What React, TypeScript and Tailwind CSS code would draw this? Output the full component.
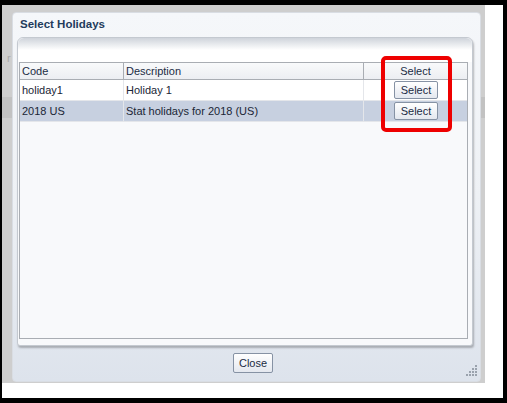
import React from "react";

const rows = [
  { code: "holiday1", desc: "Holiday 1", selected: false },
  { code: "2018 US", desc: "Stat holidays for 2018 (US)", selected: true },
];

const SelectButton = ({ label }: { label: string }) => (
  <button className="flex h-[18px] w-[44px] items-center justify-center rounded-[2px] border border-[#8692a4] bg-gradient-to-b from-white to-[#e4e8ef] text-[11px] leading-none text-[#1b2c44]">
    {label}
  </button>
);

const ResizeGrip = () => (
  <svg width="11" height="11" viewBox="0 0 11 11" className="text-[#9aa2ad]">
    {[
      [9, 0],
      [9, 3],
      [6, 3],
      [9, 6],
      [6, 6],
      [3, 6],
      [9, 9],
      [6, 9],
      [3, 9],
      [0, 9],
    ].map(([x, y], i) => (
      <rect key={i} x={x} y={y} width="2" height="2" fill="currentColor" />
    ))}
  </svg>
);

export default function App() {
  return (
    <div className="h-[403px] w-[507px] border-b-[5px] border-l-2 border-r-4 border-t-[5px] border-black bg-white font-['Liberation_Sans',Arial,sans-serif]">
      <div className="relative h-[378px] w-[483px] bg-[#cecece] pl-[10px] pt-[7px]">
        {/* page behind the overlay */}
        <div className="absolute left-0 top-[92px] h-[21px] w-full bg-[#c2c2c2]" />
        <span className="absolute left-[5px] top-[45px] text-[11px] text-[#a9a9a9]">r</span>

        {/* dialog */}
        <div className="relative flex h-[370px] w-[469px] flex-col rounded-[4px] border border-[#d9dde3] bg-gradient-to-b from-[#f5f7fa] via-[#eef1f5] to-[#dde3ec]">
          <div className="flex h-[24px] items-center pl-[7px] text-[11.5px] font-bold text-[#1f3b5c]">
            Select Holidays
          </div>

          <div className="ml-[4px] mr-[7px] flex h-[309px] flex-col rounded-t-[6px] rounded-b-[3px] border border-[#c4c9d0] bg-[#f8f9fb] shadow-[1px_2px_2px_rgba(0,0,0,0.25)]">
            <div className="h-[24px] rounded-t-[6px] bg-gradient-to-b from-[#cfd4db] via-white to-white" />
            <div className="ml-[1px] mr-[4px] flex h-[277px] flex-col border border-[#a9adb3] bg-[#f8f9fb] text-[11px] text-[#1a2636]">
              <div className="flex h-[17px] border-b border-[#a9adb3] bg-gradient-to-b from-[#f9fafb] to-[#eceef2] text-[#1b2c44]">
                <div className="flex w-[104px] items-center border-r border-[#a9adb3] pl-[2px]">Code</div>
                <div className="flex w-[240px] items-center border-r border-[#a9adb3] pl-[2px]">Description</div>
                <div className="flex flex-1 items-center justify-center">Select</div>
              </div>
              {rows.map((row) => (
                <div
                  key={row.code}
                  className={`flex h-[21px] border-b border-[#e4e6ea] ${row.selected ? "bg-[#c7d0e0]" : "bg-white"}`}
                >
                  <div className="flex w-[104px] items-center border-r border-[#e4e6ea] pl-[2px]">{row.code}</div>
                  <div className="flex w-[240px] items-center border-r border-[#e4e6ea] pl-[2px]">{row.desc}</div>
                  <div className="flex flex-1 items-center justify-center pl-[1px]">
                    <SelectButton label="Select" />
                  </div>
                </div>
              ))}
            </div>
          </div>

          <div className="flex flex-1 items-start pl-[220px] pt-[7px]">
            <button className="flex h-[20px] w-[40px] items-center justify-center rounded-[2px] border border-[#8692a4] bg-gradient-to-b from-white to-[#e4e8ef] text-[11px] leading-none text-[#1b2c44]">
              Close
            </button>
          </div>

          <div className="absolute bottom-[5px] right-[3px]">
            <ResizeGrip />
          </div>
        </div>

        {/* annotation */}
        <div className="absolute left-[379px] top-[51px] h-[76px] w-[71px] rounded-[5px] border-4 border-[#ee0000]" />
      </div>
    </div>
  );
}
